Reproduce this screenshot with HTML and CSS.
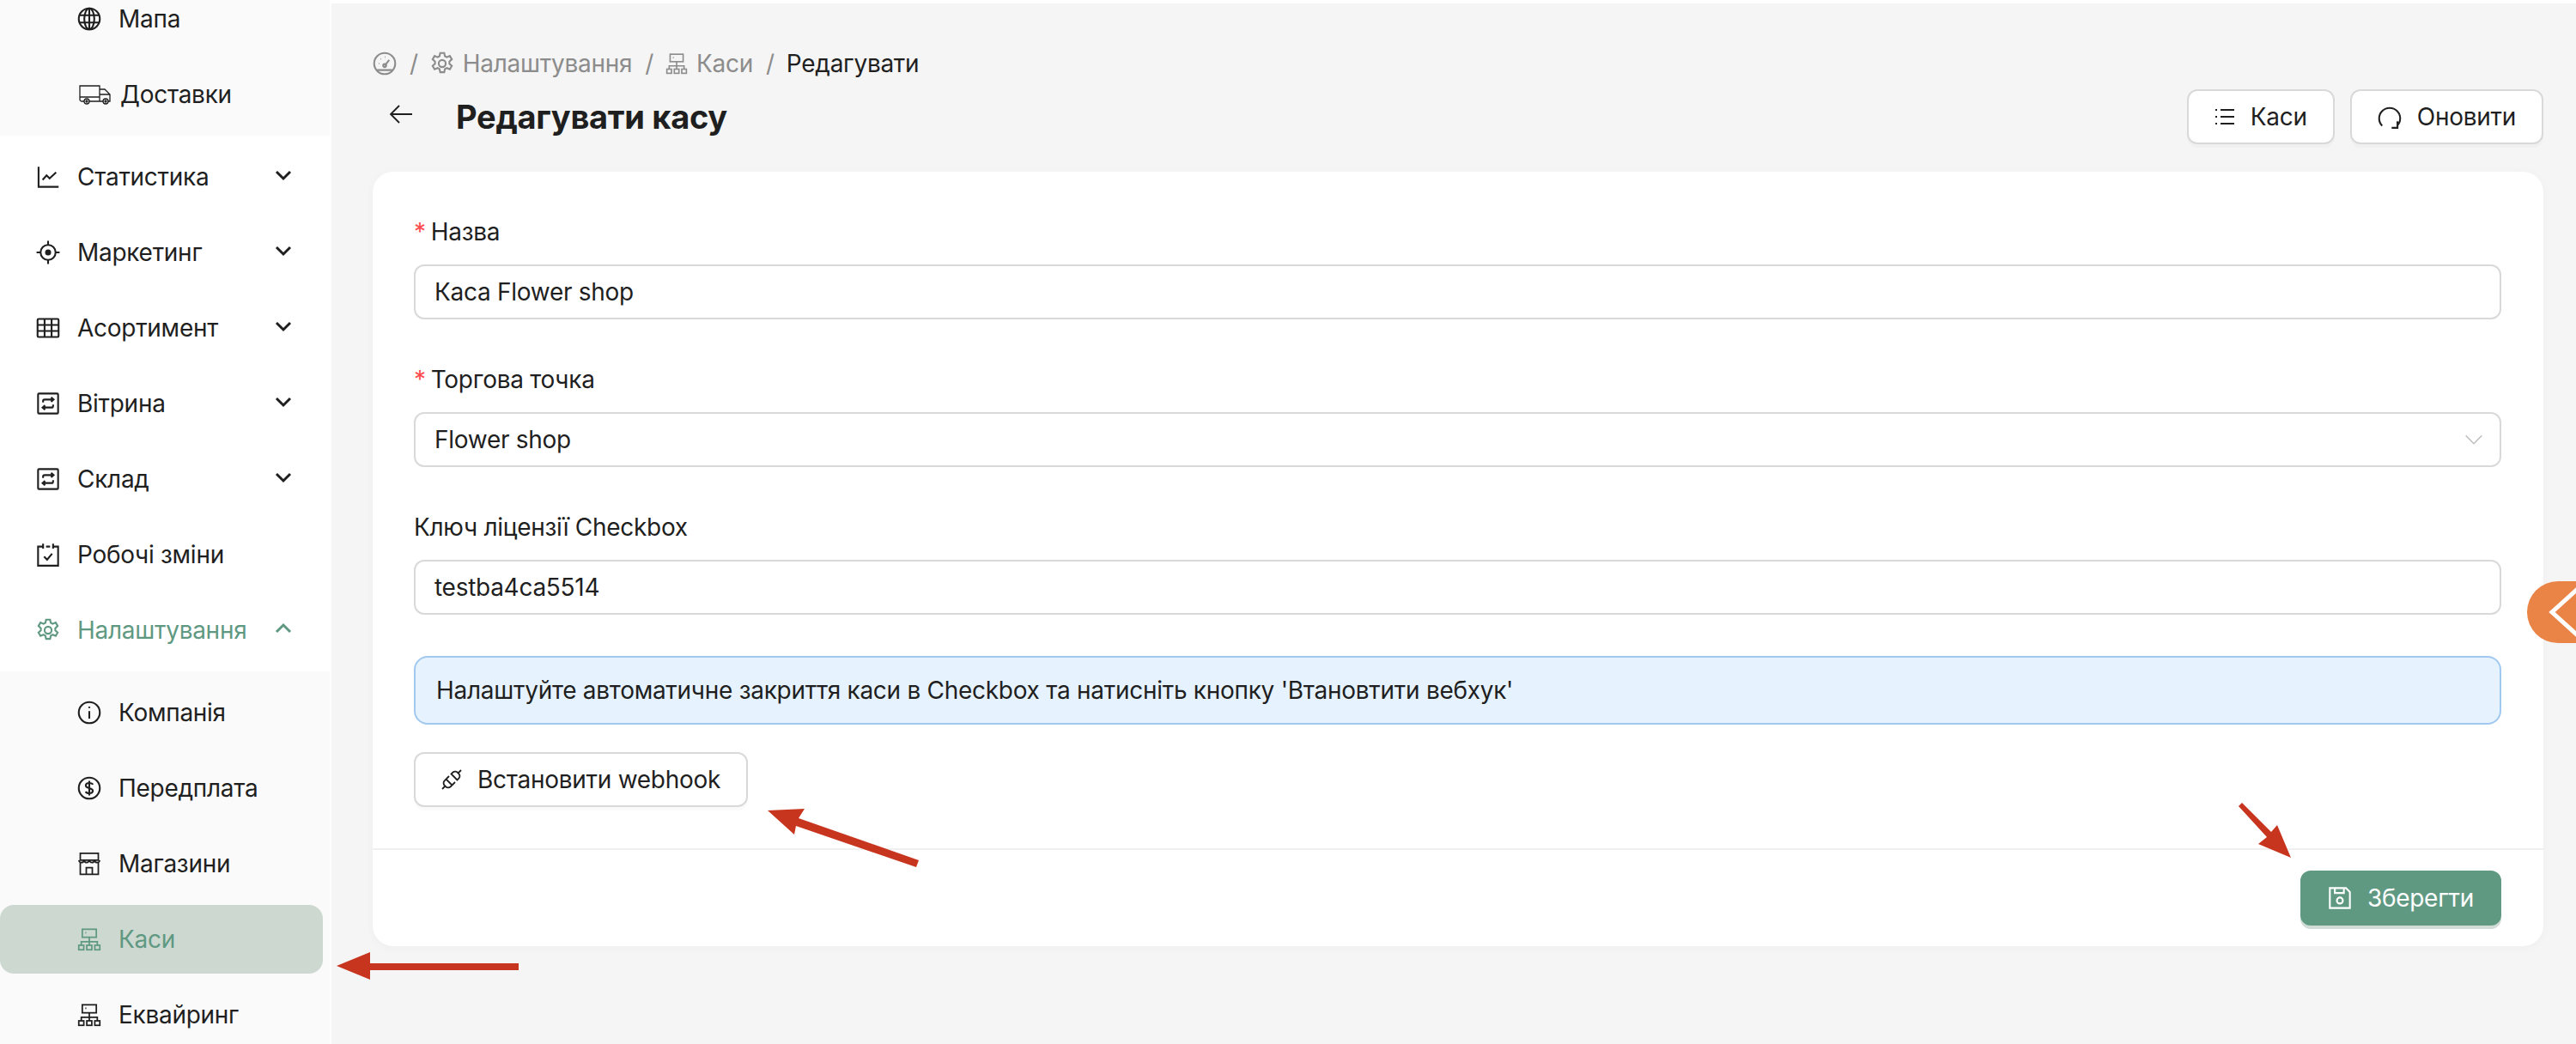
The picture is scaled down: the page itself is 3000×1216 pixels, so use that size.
FILE: index.html
```html
<!DOCTYPE html>
<html lang="uk">
<head>
<meta charset="utf-8">
<title>Редагувати касу</title>
<link rel="stylesheet" href="styles.css">
</head>
<body>
<svg class="defs" width="0" height="0" aria-hidden="true">
  <defs>
    <symbol id="i-globe" viewBox="0 0 24 24"><circle cx="12" cy="12" r="10.500"/><ellipse cx="12" cy="12" rx="5" ry="10.500"/><path d="M12 1.500v21M2 8.300h20M2 15.700h20"/></symbol>
    <symbol id="i-truck" viewBox="0 0 38 24"><path d="M6 20H3a2 2 0 0 1-2-2V2h23v18H12M24 6h6l6 6v8h-2M24 20h4M1 15h23M24 12h12"/><circle cx="9" cy="20" r="3"/><circle cx="9" cy="20" r="1"/><circle cx="31" cy="20" r="3"/><circle cx="31" cy="20" r="1"/></symbol>
    <symbol id="i-chart" viewBox="0 0 24 24"><path d="M2.500 2v20h20M6.500 15l4-4.500 3 3 6.500-6"/></symbol>
    <symbol id="i-aim" viewBox="0 0 24 24"><circle cx="12" cy="12" r="7.500"/><circle class="solid" cx="12" cy="12" r="3"/><path d="M12 .5v4M12 19.500v4M.5 12h4M19.500 12h4"/></symbol>
    <symbol id="i-table" viewBox="0 0 24 24"><rect x="1.500" y="3" width="21" height="18" rx="1"/><path d="M1.500 9h21M1.500 15h21M8.500 3v18M15.500 3v18"/></symbol>
    <symbol id="i-retweet" viewBox="0 0 24 24"><rect x="2" y="2" width="20" height="20" rx="1"/><path d="M7 11V9.500A1.500 1.500 0 0 1 8.500 8H17M15 5.800 17.500 8 15 10.200M17 13v1.500a1.500 1.500 0 0 1-1.500 1.500H7M9 13.800 6.500 16 9 18.200"/></symbol>
    <symbol id="i-cal" viewBox="0 0 24 24"><path d="M7 4H2v19h20V4h-5M10 4h4M7 1v5M17 1v5M8 14l3 3 5-6"/></symbol>
    <symbol id="i-gear" viewBox="0 0 24 24"><circle cx="12" cy="12" r="3.500"/><path d="M10 1.500h4l.7 3.200 1.900 1 3-1.300 2 3.400-2.400 2.200v2.200l2.400 2.200-2 3.400-3-1.300-1.900 1-.7 3.200h-4l-.7-3.200-1.900-1-3 1.300-2-3.400 2.400-2.200v-2.200L2.400 7.800l2-3.400 3 1.300 1.900-1z"/></symbol>
    <symbol id="i-info" viewBox="0 0 24 24"><circle cx="12" cy="12" r="10.500"/><path d="M12 10.500V18M12 6v1.500"/></symbol>
    <symbol id="i-dollar" viewBox="0 0 24 24"><circle cx="12" cy="12" r="10.500"/><path d="M15.500 8.500C15 7 13.500 6.800 12 6.800c-2 0-3.500 1-3.500 2.600 0 3.400 7 1.800 7 5.200 0 1.600-1.500 2.600-3.500 2.600-1.500 0-3-.4-3.600-1.800M12 4.800v14.400"/></symbol>
    <symbol id="i-store" viewBox="0 0 24 24" stroke-width="1.500"><path d="M3 1.500h18v7H3zM1.500 8.500c1 3.200 4.500 3.200 5.300 0 .8 3.200 4.500 3.200 5.200 0 .7 3.200 4.400 3.200 5.200 0 .8 3.200 4.300 3.200 5.300 0M3 11v11.500h18V11M9 22.500V16h6v6.500"/></symbol>
    <symbol id="i-site" viewBox="0 0 24 24" stroke-width="1.500"><rect x="5" y="2" width="14" height="8"/><path d="M12 10v4M4 18v-3.500h16V18M12 14v4M8 5.500h1"/><rect x="1.500" y="18" width="5" height="4.500"/><rect x="9.500" y="18" width="5" height="4.500"/><rect x="17.500" y="18" width="5" height="4.500"/></symbol>
    <symbol id="i-dash" viewBox="0 0 24 24"><circle cx="12" cy="12" r="10.500"/><path d="M3.500 18.500h17M12 14l4.500-5.500M6 12h.5M8 7.500h.5M12 5.500h.5"/><circle cx="12" cy="14" r="1.500"/></symbol>
    <symbol id="i-list" viewBox="0 0 24 24"><path d="M7 4h16M7 12h16M7 20h16M1 4h2M1 12h2M1 20h2"/></symbol>
    <symbol id="i-reload" viewBox="0 0 24 24"><path d="M4.500 21A10.500 10.500 0 1 1 19.500 21M19.800 16.500V23H14"/></symbol>
    <symbol id="i-save" viewBox="0 0 24 24"><path d="M2 2h16l4 4v16H2zM7 2v5h9V2"/><circle cx="12" cy="14.500" r="3"/></symbol>
    <symbol id="i-plug" viewBox="0 0 24 24"><path d="M1 23l4-4M23 1l-4 4M5.500 11.500l7 7-2 2a4 4 0 0 1-6-1 4 4 0 0 1-1-6zM18.500 12.500l-7-7 2-2a4 4 0 0 1 6 1 4 4 0 0 1 1 6zM9 8l-3 3M16 15l-3 3"/></symbol>
    <symbol id="i-back" viewBox="0 0 28 24"><path d="M27 12H2M12 2 2 12l10 10"/></symbol>
    <symbol id="i-down" viewBox="0 0 24 24"><path d="M4 8l8 8 8-8"/></symbol>
    <symbol id="i-up" viewBox="0 0 24 24"><path d="M4 16l8-8 8 8"/></symbol>
  </defs>
</svg>

<div class="app">
  <aside class="sidebar">
    <nav class="menu">
      <div class="submenu submenu-top">
        <a class="item sub"><svg class="ic"><use href="#i-globe"/></svg><span>Мапа</span></a>
        <a class="item sub"><svg class="ic ic-truck"><use href="#i-truck"/></svg><span>Доставки</span></a>
      </div>
      <a class="item"><svg class="ic"><use href="#i-chart"/></svg><span>Статистика</span><svg class="caret"><use href="#i-down"/></svg></a>
      <a class="item"><svg class="ic"><use href="#i-aim"/></svg><span>Маркетинг</span><svg class="caret"><use href="#i-down"/></svg></a>
      <a class="item"><svg class="ic"><use href="#i-table"/></svg><span>Асортимент</span><svg class="caret"><use href="#i-down"/></svg></a>
      <a class="item"><svg class="ic"><use href="#i-retweet"/></svg><span>Вітрина</span><svg class="caret"><use href="#i-down"/></svg></a>
      <a class="item"><svg class="ic"><use href="#i-retweet"/></svg><span>Склад</span><svg class="caret"><use href="#i-down"/></svg></a>
      <a class="item"><svg class="ic"><use href="#i-cal"/></svg><span>Робочі зміни</span></a>
      <a class="item open"><svg class="ic"><use href="#i-gear"/></svg><span>Налаштування</span><svg class="caret"><use href="#i-up"/></svg></a>
      <div class="submenu">
        <a class="item sub"><svg class="ic"><use href="#i-info"/></svg><span>Компанія</span></a>
        <a class="item sub"><svg class="ic"><use href="#i-dollar"/></svg><span>Передплата</span></a>
        <a class="item sub"><svg class="ic"><use href="#i-store"/></svg><span>Магазини</span></a>
        <a class="item sub active"><svg class="ic"><use href="#i-site"/></svg><span>Каси</span></a>
        <a class="item sub"><svg class="ic"><use href="#i-site"/></svg><span>Еквайринг</span></a>
      </div>
    </nav>
  </aside>

  <main class="main">
    <div class="crumbs">
      <svg class="ic"><use href="#i-dash"/></svg>
      <span class="sep">/</span>
      <svg class="ic"><use href="#i-gear"/></svg><span class="crumb">Налаштування</span>
      <span class="sep">/</span>
      <svg class="ic ic-sm"><use href="#i-site"/></svg><span class="crumb">Каси</span>
      <span class="sep">/</span>
      <span class="current">Редагувати</span>
    </div>

    <header class="head">
      <svg class="back"><use href="#i-back"/></svg>
      <h1 class="title">Редагувати касу</h1>
      <div class="actions">
        <button class="btn"><svg class="ic ic-narrow"><use href="#i-list"/></svg>Каси</button>
        <button class="btn"><svg class="ic"><use href="#i-reload"/></svg>Оновити</button>
      </div>
    </header>

    <section class="card">
      <div class="card-body">
        <div class="field">
          <div class="label"><span class="req">*</span>Назва</div>
          <div class="control">Каса Flower shop</div>
        </div>
        <div class="field">
          <div class="label"><span class="req">*</span>Торгова точка</div>
          <div class="control select">Flower shop<svg class="select-arrow"><use href="#i-down"/></svg></div>
        </div>
        <div class="field">
          <div class="label">Ключ ліцензії Checkbox</div>
          <div class="control">testba4ca5514</div>
        </div>
        <div class="alert">Налаштуйте автоматичне закриття каси в Checkbox та натисніть кнопку 'Втановтити вебхук'</div>
        <button class="btn"><svg class="ic ic-narrow"><use href="#i-plug"/></svg>Встановити webhook</button>
      </div>
      <div class="card-foot">
        <button class="btn btn-primary"><svg class="ic"><use href="#i-save"/></svg>Зберегти</button>
      </div>
    </section>
  </main>
</div>

<div class="side-tab"><svg class="side-tab-icon" viewBox="0 0 57 72"><path d="M62 6 29 36l33 30"/></svg></div>

<svg class="marks" viewBox="0 0 3000 1216" aria-hidden="true">
  <path d="M392 1125 431 1109V1122L604 1122V1130L431 1130V1141Z"/>
  <path d="M894 944 937 942 930 953 1070 1002 1067 1010 927 962 925 972Z"/>
  <path d="M2668 999 2652 961 2645 969 2611 935 2607 939 2640 975 2630 983Z"/>
</svg>
</body>
</html>
```
FILE: styles.css
```css
* { box-sizing: border-box; }
html, body { margin: 0; padding: 0; }
body {
  width: 3000px;
  height: 1216px;
  overflow: hidden;
  background: #fff;
  color: #1f1f1f;
  font-family: Inter, "Noto Sans", sans-serif;
  font-size: 28px;
  line-height: 44px;
  letter-spacing: -.28px;
  position: relative;
}
.defs { position: absolute; }
.ic, .caret, .back, .select-arrow {
  fill: none;
  stroke: currentColor;
  stroke-width: 1.8;
}
.solid { fill: currentColor; stroke: none; }

.app { display: flex; height: 1216px; overflow: hidden; }

/* Sidebar */
.sidebar { width: 386px; flex: none; overflow: hidden; background: #fff; }
.menu { display: flex; flex-direction: column; gap: 8px; margin-top: -26px; }
.submenu {
  display: flex;
  flex-direction: column;
  gap: 8px;
  width: 384px;
  padding: 8px 0;
  background: #fafafa;
}
.item {
  display: flex;
  align-items: center;
  gap: 20px;
  flex: none;
  width: 376px;
  height: 80px;
  padding: 0 34px 0 42px;
  border-radius: 16px;
}
.item.sub { padding-left: 90px; }
.item.open { color: #5f9982; }
.item.active { color: #5f9982; background: #cdd8d1; }
.ic { width: 28px; height: 28px; flex: none; }
.ic-sm { width: 26px; height: 26px; }
.ic-narrow { width: 24px; height: 24px; }
.ic-truck { width: 38px; height: 24px; margin-left: 2px; margin-right: -10px; stroke-width: 1.3; }
.caret { width: 24px; height: 24px; margin-left: auto; margin-top: -4px; stroke-width: 3; }

/* Main */
.main {
  flex: 1;
  min-width: 0;
  margin-top: 4px;
  padding: 48px 38px 0 48px;
  background: #f5f5f5;
}
.crumbs { display: flex; align-items: center; height: 44px; color: #8c8c8c; }
.crumbs .ic + .crumb { margin-left: 10px; }
.sep { margin: 0 14px 0 15px; }
.current { color: #1f1f1f; }

.head { display: flex; align-items: center; height: 64px; margin-top: 8px; }
.back { width: 28px; height: 24px; margin: -6px 50px 0 19px; flex: none; stroke-width: 1.8; }
.title { margin: 0; font-size: 38px; line-height: 56px; font-weight: 700; }
.actions { display: flex; gap: 18px; margin-left: auto; }

.btn {
  display: inline-flex;
  align-items: center;
  gap: 18px;
  height: 64px;
  padding: 0 30px;
  border: 2px solid #d9d9d9;
  border-radius: 12px;
  background: #fff;
  box-shadow: 0 4px 0 rgba(0, 0, 0, .02);
  color: #1f1f1f;
  font: inherit;
  letter-spacing: inherit;
}
.btn-primary {
  border-color: #5f9982;
  background: #5f9982;
  color: #fff;
  box-shadow: 0 4px 0 #d0dcd5;
}

/* Card */
.card {
  margin-top: 32px;
  height: 902px;
  background: #fff;
  border-radius: 24px;
  box-shadow: 0 2px 12px rgba(0, 0, 0, .03);
}
.card-body { padding: 48px 49px 48px 48px; border-bottom: 2px solid #f0f0f0; }
.card-foot { display: flex; justify-content: flex-end; padding: 24px 49px 24px 48px; }
.field { margin-bottom: 48px; }
.label { height: 44px; margin-bottom: 16px; }
.req { color: #ff4d4f; margin-right: 6px; }
.control {
  display: flex;
  align-items: center;
  justify-content: space-between;
  height: 64px;
  padding: 0 22px;
  border: 2px solid #d9d9d9;
  border-radius: 12px;
  background: #fff;
}
.select { padding-right: 16px; }
.select-arrow { width: 28px; height: 28px; color: #bfbfbf; stroke-width: 1.3; }
.alert {
  display: flex;
  align-items: center;
  height: 80px;
  margin-bottom: 32px;
  padding: 0 24px;
  border: 2px solid #a0c8f0;
  border-radius: 16px;
  background: #e6f3fe;
}

/* Overlays */
.side-tab {
  position: absolute;
  top: 677px;
  right: 0;
  width: 57px;
  height: 72px;
  border-radius: 36px 0 0 36px;
  background: #ea8346;
  overflow: hidden;
}
.side-tab-icon { display: block; width: 57px; height: 72px; fill: none; stroke: #fff; stroke-width: 5; }
.marks { position: absolute; inset: 0; width: 3000px; height: 1216px; fill: #c8351f; pointer-events: none; }
```
